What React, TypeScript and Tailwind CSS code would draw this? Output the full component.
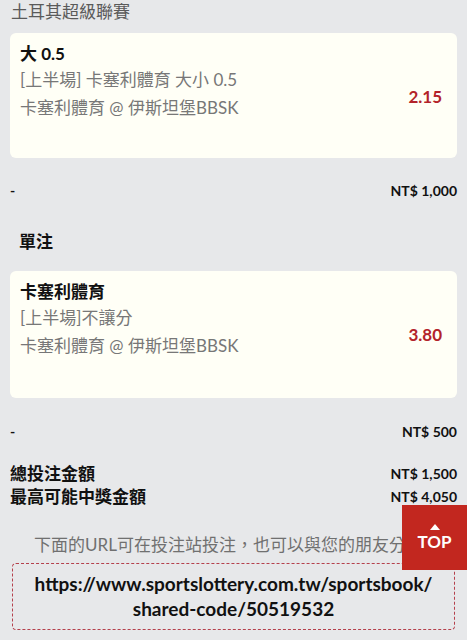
export default function App() {
  const font = { fontFamily: "Lato, 'Noto Sans CJK TC', sans-serif" }
  return (
    <div className="relative h-[640px] w-[467px] overflow-hidden bg-[#e7e8ea]" style={font}>
      <div className="px-[10px]">
        <div className="pl-[1px] pt-[1px] text-[17px] leading-[22px] text-[#5a5a5a]">土耳其超級聯賽</div>

        <BetCard
          title="大 0.5"
          line1="[上半場] 卡塞利體育 大小 0.5"
          line2="卡塞利體育 @ 伊斯坦堡BBSK"
          odds="2.15"
          className="mt-[10px] h-[125px]"
        />

        <div className="mt-[23px] flex items-center justify-between text-[14px] font-bold leading-[20px] text-[#111]">
          <span>-</span>
          <span>NT$ 1,000</span>
        </div>

        <div className="mt-[30px] pl-[9px] text-[17px] font-bold leading-[22px] text-[#111]">單注</div>

        <BetCard
          title="卡塞利體育"
          line1="[上半場]不讓分"
          line2="卡塞利體育 @ 伊斯坦堡BBSK"
          odds="3.80"
          className="mt-[18px] h-[127px]"
        />

        <div className="mt-[24px] flex items-center justify-between text-[14px] font-bold leading-[20px] text-[#111]">
          <span>-</span>
          <span>NT$ 500</span>
        </div>

        <div className="mt-[21px] flex items-center justify-between leading-[22px] text-[#111]">
          <span className="text-[17px] font-bold">總投注金額</span>
          <span className="text-[14px] font-bold">NT$ 1,500</span>
        </div>
        <div className="mt-[1px] flex items-center justify-between leading-[22px] text-[#111]">
          <span className="text-[17px] font-bold">最高可能中獎金額</span>
          <span className="text-[14px] font-bold">NT$ 4,050</span>
        </div>

        <div className="mt-[25px] whitespace-nowrap pl-[24px] text-[17px] leading-[24px] text-[#707070]">
          下面的URL可在投注站投注，也可以與您的朋友分享
        </div>

        <div className="mx-[2px] mt-[6px] flex h-[67px] flex-col items-center justify-center rounded-[4px] border border-dashed border-[#b5404c] pb-[1px] text-center text-[19px] font-bold leading-[25px] text-[#111]">
          <span>https://www.sportslottery.com.tw/sportsbook/</span>
          <span>shared-code/50519532</span>
        </div>
      </div>

      <button className="absolute left-[402px] top-[505px] flex h-[65px] w-[65px] flex-col items-center justify-center bg-[#c2271f] text-white">
        <svg width="10" height="6" viewBox="0 0 10 6" className="mb-[3px]">
          <path d="M5 0 L10 6 L0 6 Z" fill="white" />
        </svg>
        <span className="text-[17px] font-bold leading-[18px]">TOP</span>
      </button>
    </div>
  )
}

function BetCard({
  title,
  line1,
  line2,
  odds,
  className,
}: {
  title: string
  line1: string
  line2: string
  odds: string
  className?: string
}) {
  return (
    <div className={`flex rounded-[6px] bg-[#fffff6] pl-[10px] pr-[15px] pt-[10px] ${className ?? ""}`}>
      <div className="flex-1">
        <div className="text-[17px] font-bold leading-[22px] text-[#111]">{title}</div>
        <div className="mt-[3px] text-[17px] leading-[24px] text-[#777]">{line1}</div>
        <div className="mt-[4px] text-[17px] leading-[24px] text-[#777]">{line2}</div>
      </div>
      <div className="mt-[43px] text-[17px] font-bold leading-[22px] text-[#b3232a]">{odds}</div>
    </div>
  )
}
